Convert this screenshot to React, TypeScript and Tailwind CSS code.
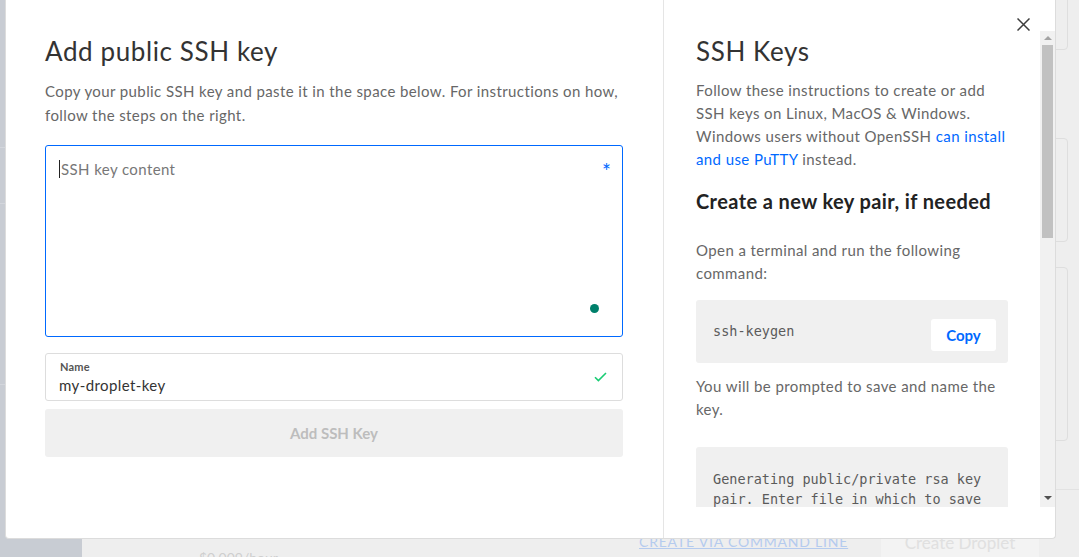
import { ReactNode } from "react";

function CodeBlock({ children }: { children: ReactNode }) {
  return (
    <pre className="mt-[26px] rounded-[3px] bg-[#f0f0f0] px-[17px] pt-[22px] pb-[20px] font-['DejaVu_Sans_Mono',monospace] text-[13.5px] leading-[20px] text-[#5b5b5b] whitespace-pre-wrap">
      {children}
    </pre>
  );
}

function Scrollbar() {
  return (
    <div className="flex w-[15px] shrink-0 flex-col items-center bg-[#f1f1f1]">
      <div className="flex h-[14px] items-center justify-center">
        <div className="h-0 w-0 border-x-[4px] border-b-[4px] border-x-transparent border-b-[#a3a3a3]" />
      </div>
      <div className="h-[193px] w-[11px] bg-[#c1c1c1]" />
      <div className="flex-1" />
      <div className="flex h-[18px] items-center justify-center">
        <div className="h-0 w-0 border-x-[4px] border-t-[4px] border-x-transparent border-t-[#505050]" />
      </div>
    </div>
  );
}

export default function App() {
  return (
    <div className="relative h-[557px] w-[1079px] overflow-hidden bg-[#eeeeee] font-['Lato',sans-serif]">
      {/* page behind the modal */}
      <div className="flex h-full">
        <aside className="flex w-[82px] shrink-0 flex-col bg-[#c8ccd3]">
          <div className="mt-[147px] h-px bg-[#d3d6dc]" />
          <div className="mt-[55px] h-px bg-[#d3d6dc]" />
          <div className="mt-[180px] h-px bg-[#d3d6dc]" />
        </aside>
        <main className="flex flex-1 flex-col">
          <div className="flex h-[490px] shrink-0 flex-col items-end border-b border-[#e2e2e2] pr-[11px]">
            <div className="-mt-[20px] h-[70px] w-[600px] shrink-0 rounded-[4px] border border-[#dedede]" />
            <div className="mt-[88px] h-[104px] w-[600px] shrink-0 rounded-[4px] border border-[#dedede]" />
            <div className="mt-[25px] h-[174px] w-[600px] shrink-0 rounded-[4px] border border-[#dedede]" />
          </div>
          <div className="flex h-[67px] shrink-0 items-start overflow-hidden whitespace-nowrap">
            <div className="ml-[117px] mt-[58px] w-[120px] shrink-0 text-[14px] leading-[20px] text-[#cfcfcf]">
              $0.009/hour
            </div>
            <a className="ml-[320px] mt-[42px] w-[211px] shrink-0 text-[14px] uppercase leading-[20px] tracking-[0.8px] text-[#b5cbee] underline">
              Create via command line
            </a>
            <div className="ml-[31px] mt-[31px] flex h-[44px] w-[158px] shrink-0 items-center justify-center rounded-[3px] bg-[#f3f3f3] text-[17px] text-[#e0e0e0]">
              Create Droplet
            </div>
          </div>
        </main>
      </div>

      {/* modal */}
      <div className="absolute left-[5px] top-0 flex h-[539px] w-[1051px] rounded-b-[4px] border-x border-b border-[#dcdcdc] bg-white">
        <section className="w-[658px] shrink-0 border-r border-[#e5e5e5] pl-[39px] pr-[40px] pt-[35px]">
          <h2 className="text-[26px] leading-[32px] tracking-[0.6px] text-[#333333]">Add public SSH key</h2>
          <p className="mt-[12px] text-[15px] leading-[24px] tracking-[0.4px] text-[#676767]">
            Copy your public SSH key and paste it in the space below. For instructions on how, follow the steps on
            the right.
          </p>
          <div className="relative mt-[18px] h-[192px] rounded-[3px] border border-[#0069ff] pl-[13px] pt-[11px]">
            <div className="flex items-center text-[15px] leading-[24px] tracking-[0.4px] text-[#777777]">
              <span className="mr-px h-[18px] w-px bg-[#222222]" />
              SSH key content
            </div>
            <span className="absolute right-[11px] top-[15px] text-[21px] leading-[20px] text-[#0069ff]">*</span>
            <span className="absolute bottom-[23px] right-[23px] h-[9px] w-[9px] rounded-full bg-[#00806b]" />
          </div>
          <div className="mt-[16px] flex h-[48px] items-center justify-between rounded-[3px] border border-[#dddddd] pl-[13px] pr-[15px]">
            <div>
              <div className="pl-px text-[11px] font-bold leading-[14px] tracking-[0.2px] text-[#555555]">Name</div>
              <div className="mt-px text-[15px] leading-[20px] tracking-[0.4px] text-[#333333]">my-droplet-key</div>
            </div>
            <svg width="13" height="10" viewBox="0 0 13 10" fill="none">
              <path d="M1 5.2L4.4 8.6L12 1" stroke="#19cc74" strokeWidth="1.6" />
            </svg>
          </div>
          <button className="mt-[8px] flex h-[48px] w-full items-center justify-center rounded-[3px] bg-[#f0f0f0] text-[15px] font-bold text-[#bdbdbd]">
            Add SSH Key
          </button>
        </section>

        <section className="relative flex flex-1 flex-col">
          <button className="absolute right-[25px] top-[18px]" aria-label="Close">
            <svg width="13" height="13" viewBox="0 0 13 13" fill="none">
              <path d="M0.5 0.5L12.5 12.5M12.5 0.5L0.5 12.5" stroke="#3d3d3d" strokeWidth="1.5" />
            </svg>
          </button>
          <div className="mt-[31px] flex h-[476px]">
            <div className="flex-1 overflow-hidden px-8 pt-[4px]">
              <h2 className="text-[26px] leading-[32px] tracking-[0.6px] text-[#333333]">SSH Keys</h2>
              <p className="mt-[12px] text-[15px] leading-[23px] tracking-[0.4px] text-[#676767]">
                Follow these instructions to create or add SSH keys on Linux, MacOS &amp; Windows. Windows users
                without OpenSSH <a className="text-[#0069ff]">can install and use PuTTY</a> instead.
              </p>
              <h3 className="mt-[16px] text-[20px] font-bold leading-[28px] tracking-[0.4px] text-[#222222]">
                Create a new key pair, if needed
              </h3>
              <p className="mt-[24px] text-[15px] leading-[23px] tracking-[0.4px] text-[#676767]">
                Open a terminal and run the following command:
              </p>
              <div className="mt-[15px] flex h-[63px] items-start justify-between rounded-[3px] bg-[#f0f0f0] pl-[17px] pr-[12px]">
                <code className="mt-[21px] font-['DejaVu_Sans_Mono',monospace] text-[13.5px] leading-[20px] text-[#5b5b5b]">
                  ssh-keygen
                </code>
                <button className="mt-[19px] flex h-[32px] w-[65px] items-center justify-center rounded-[3px] bg-white text-[15px] font-bold text-[#0069ff]">
                  Copy
                </button>
              </div>
              <p className="mt-[12px] text-[15px] leading-[23px] tracking-[0.4px] text-[#676767]">
                You will be prompted to save and name the key.
              </p>
              <CodeBlock>
                Generating public/private rsa key pair. Enter file in which to save the key
                (/Users/USER/.ssh/id_rsa):
              </CodeBlock>
              <p className="mt-[12px] text-[15px] leading-[23px] tracking-[0.4px] text-[#676767]">
                Next you will be asked to create and confirm a passphrase for the key (highly recommended):
              </p>
              <CodeBlock>
                Enter passphrase (empty for no passphrase): Enter same passphrase again:
              </CodeBlock>
            </div>
            <Scrollbar />
          </div>
        </section>
      </div>
    </div>
  );
}
